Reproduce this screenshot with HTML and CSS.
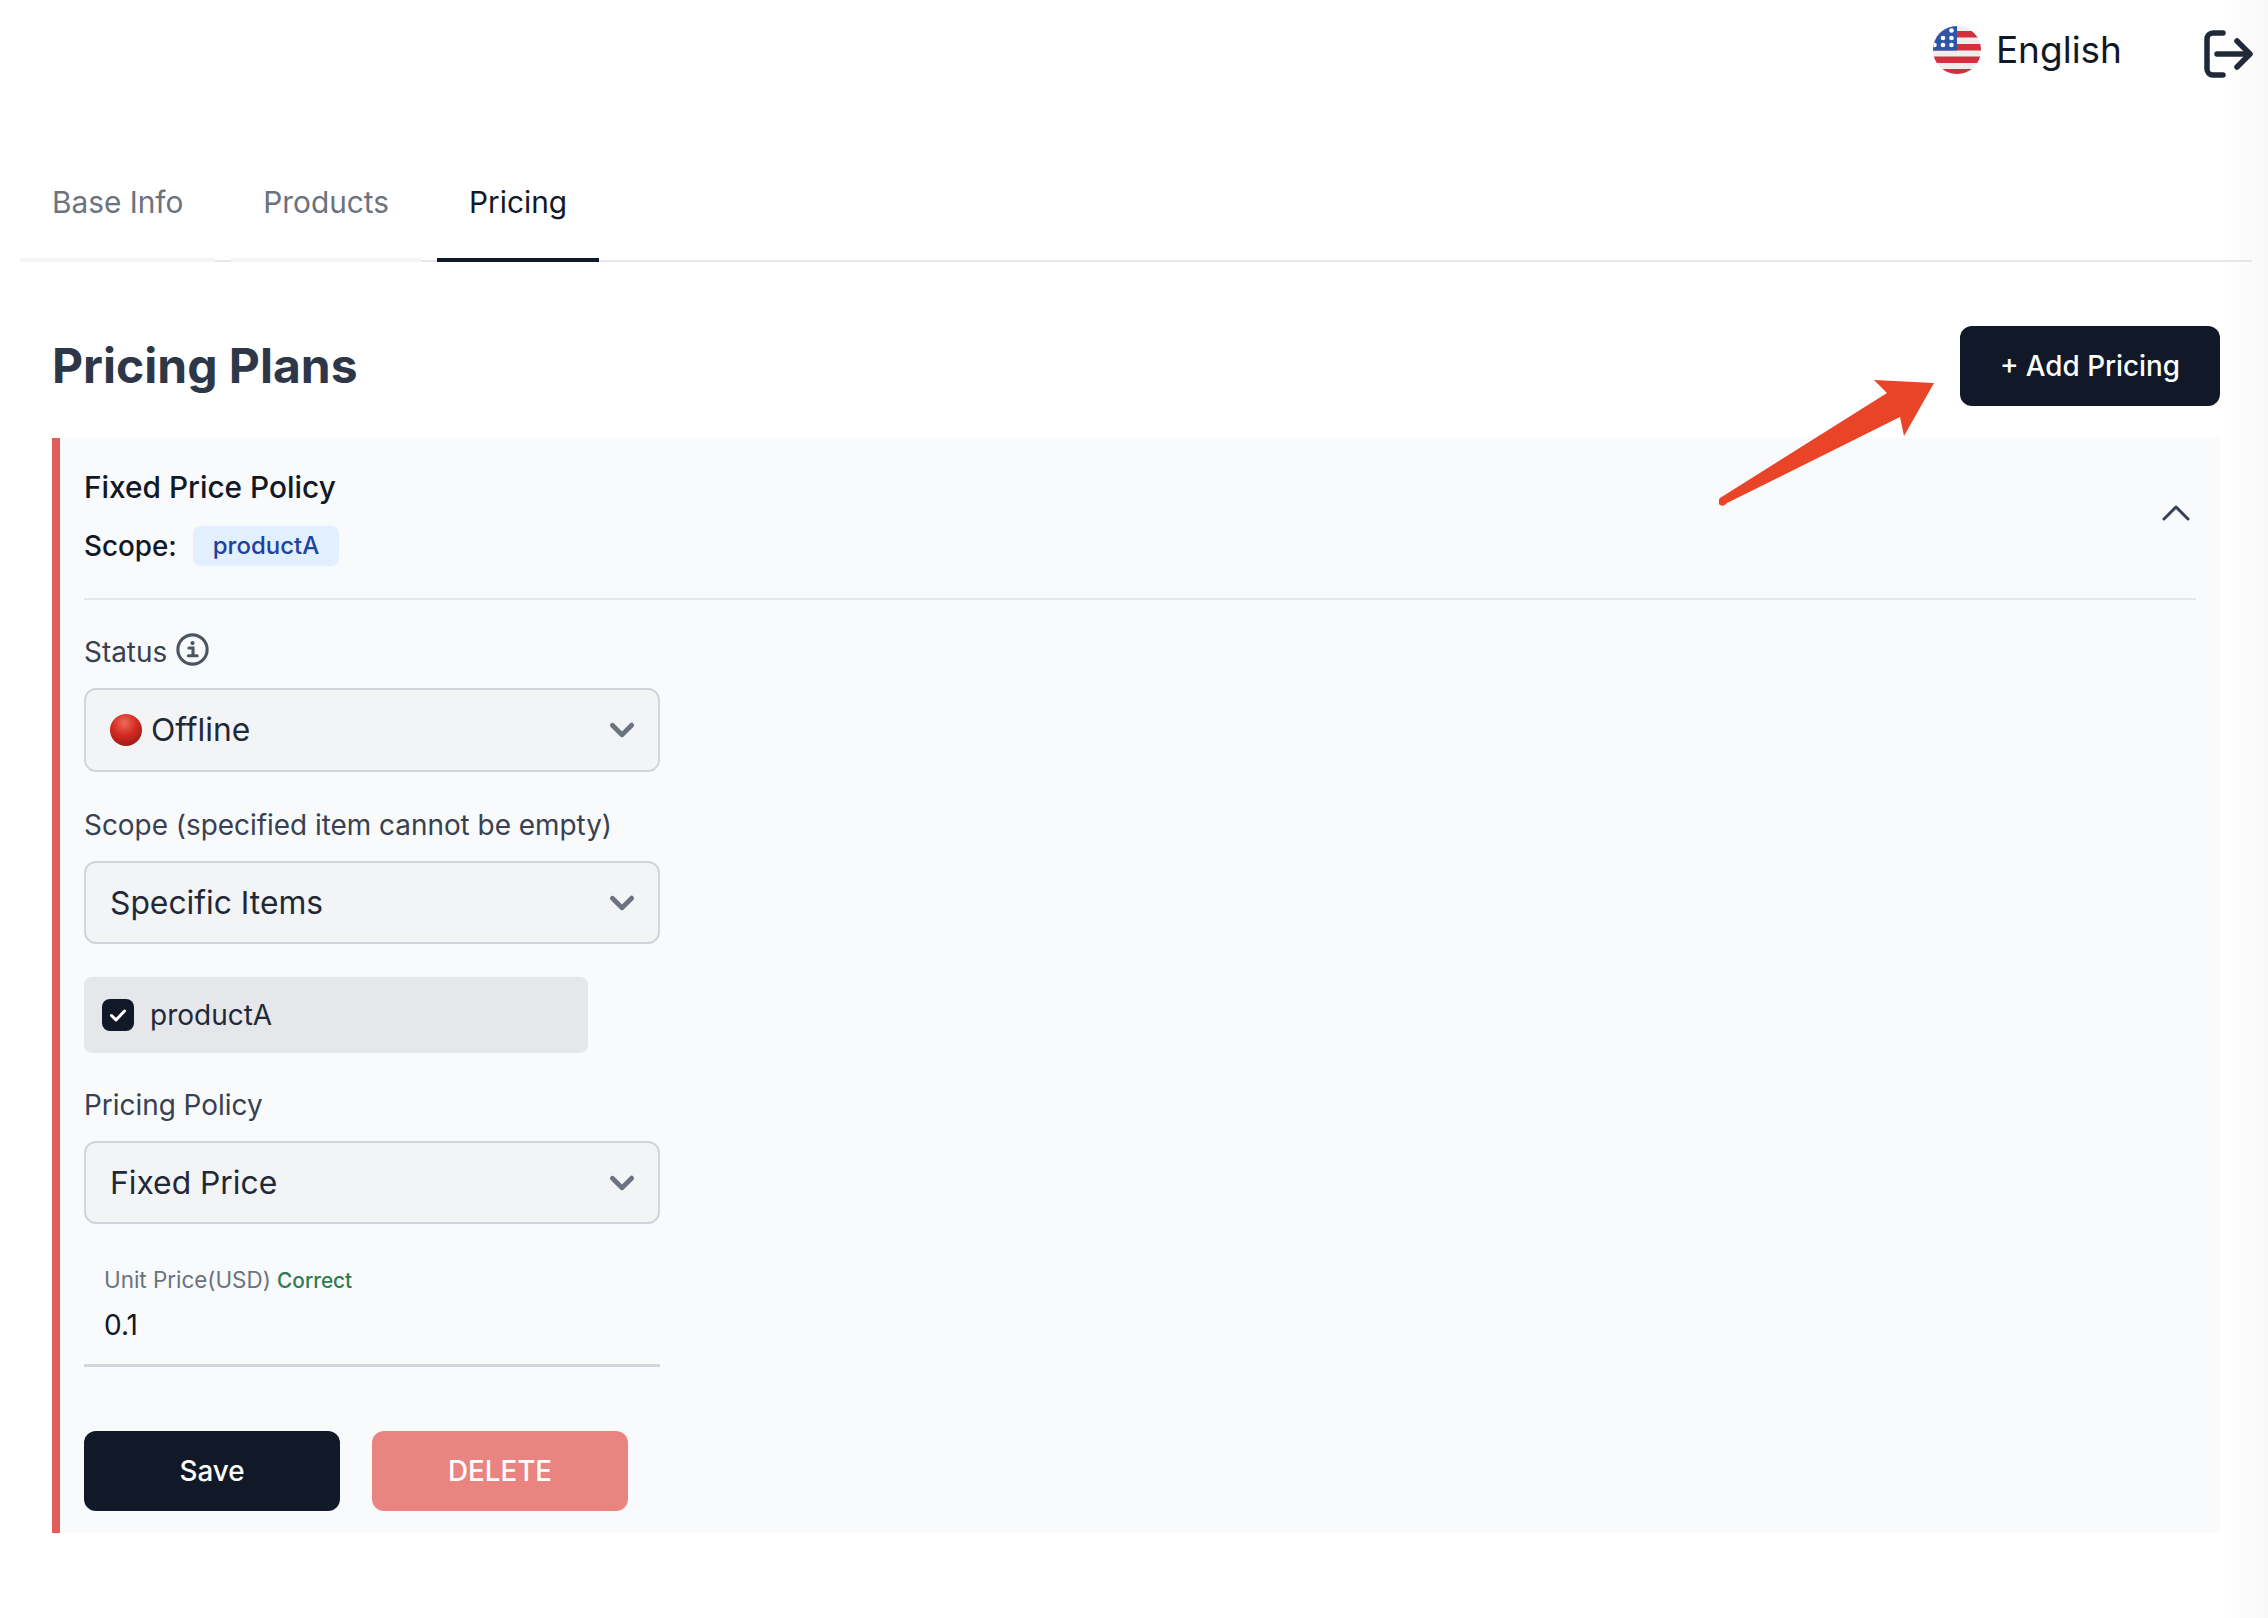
FILE: index.html
```html
<!DOCTYPE html>
<html lang="en">
<head>
<meta charset="utf-8">
<title>Pricing Plans</title>
<link rel="stylesheet" href="styles.css">
</head>
<body>
<div class="edge-shade"></div>
<header class="topbar">
  <div class="lang">
    <svg class="flag" viewBox="0 0 48 48" width="48" height="48">
      <defs><clipPath id="flagclip"><circle cx="24" cy="24" r="24"/></clipPath></defs>
      <g clip-path="url(#flagclip)">
        <rect width="48" height="48" fill="#eeeeee"/>
        <rect y="5" width="48" height="6.5" fill="#d32f3c"/>
        <rect y="18" width="48" height="6.5" fill="#d32f3c"/>
        <rect y="30.500" width="48" height="6.500" fill="#d32f3c"/>
        <rect y="43" width="48" height="6" fill="#d32f3c"/>
        <rect width="24" height="24.500" fill="#2f55a8"/>
        <g fill="#ffffff">
          <circle cx="18.500" cy="4.500" r="2.300"/>
          <circle cx="10" cy="12" r="2.300"/>
          <circle cx="18.500" cy="12" r="2.300"/>
          <circle cx="1.500" cy="19" r="2.300"/>
          <circle cx="10" cy="19" r="2.300"/>
          <circle cx="18.500" cy="19" r="2.300"/>
        </g>
      </g>
    </svg>
    <span class="lang-name">English</span>
  </div>
  <svg class="logout" viewBox="0 0 52 52" width="52" height="52" fill="none" stroke="#1f2937" stroke-width="5.500" stroke-linecap="round" stroke-linejoin="round">
    <path d="M21 5H11a6 6 0 0 0-6 6v30a6 6 0 0 0 6 6h10"/>
    <path d="M15 26h32"/>
    <path d="M35 13l13 13-13 13"/>
  </svg>
</header>

<main class="main">
  <nav class="tabs">
    <a class="tab">Base Info</a>
    <a class="tab">Products</a>
    <a class="tab tab-active">Pricing</a>
  </nav>

  <section class="content">
    <div class="section-head">
      <h1 class="title">Pricing Plans</h1>
      <button class="btn btn-dark btn-add">+ Add Pricing</button>
    </div>

    <article class="card">
      <div class="card-head">
        <div class="card-head-text">
          <div class="policy-name">Fixed Price Policy</div>
          <div class="scope-row"><span class="scope-key">Scope:</span><span class="badge">productA</span></div>
        </div>
        <svg class="collapse" viewBox="0 0 32 20" width="32" height="20" fill="none" stroke="#374151" stroke-width="3" stroke-linecap="round" stroke-linejoin="round"><path d="M4 16L16 4l12 12"/></svg>
      </div>

      <div class="form">
        <div class="label label-status">Status
          <svg class="info" viewBox="0 0 32 32" width="33" height="33" fill="none" stroke="#4b5563" stroke-width="3"><circle cx="16" cy="16" r="14.200"/><path d="M12.500 14.500h4v7M12 22h8.500" stroke-linecap="round"/><circle cx="16" cy="9.800" r="2" fill="#4b5563" stroke="none"/></svg>
        </div>
        <div class="select select-tall">
          <svg class="dot" viewBox="0 0 32 32" width="32" height="32"><defs><radialGradient id="reddot" cx="45%" cy="28%" r="78%"><stop offset="0" stop-color="#ee6a5c"/><stop offset="0.5" stop-color="#d32a20"/><stop offset="1" stop-color="#961a14"/></radialGradient></defs><circle cx="16" cy="16" r="16" fill="url(#reddot)"/></svg>
          <span class="select-text">Offline</span>
          <svg class="chev" viewBox="0 0 20 20" width="48" height="48"><path fill="#6b7280" fill-rule="evenodd" d="M5.293 7.293a1 1 0 011.414 0L10 10.586l3.293-3.293a1 1 0 111.414 1.414l-4 4a1 1 0 01-1.414 0l-4-4a1 1 0 010-1.414z"/></svg>
        </div>

        <div class="label label-scope">Scope (specified item cannot be empty)</div>
        <div class="select">
          <span class="select-text">Specific Items</span>
          <svg class="chev" viewBox="0 0 20 20" width="48" height="48"><path fill="#6b7280" fill-rule="evenodd" d="M5.293 7.293a1 1 0 011.414 0L10 10.586l3.293-3.293a1 1 0 111.414 1.414l-4 4a1 1 0 01-1.414 0l-4-4a1 1 0 010-1.414z"/></svg>
        </div>

        <div class="check-item">
          <span class="checkbox"><svg viewBox="0 0 20 20" width="20" height="20" fill="none" stroke="#fff" stroke-width="3" stroke-linecap="round" stroke-linejoin="round"><path d="M3.500 10.500l4.500 4.500 8.500-9"/></svg></span>
          <span class="check-text">productA</span>
        </div>

        <div class="label label-policy">Pricing Policy</div>
        <div class="select">
          <span class="select-text">Fixed Price</span>
          <svg class="chev" viewBox="0 0 20 20" width="48" height="48"><path fill="#6b7280" fill-rule="evenodd" d="M5.293 7.293a1 1 0 011.414 0L10 10.586l3.293-3.293a1 1 0 111.414 1.414l-4 4a1 1 0 01-1.414 0l-4-4a1 1 0 010-1.414z"/></svg>
        </div>

        <div class="float-field">
          <div class="float-label">Unit Price(USD) <span class="ok">Correct</span></div>
          <div class="float-value">0.1</div>
        </div>
      </div>

      <div class="actions">
        <button class="btn btn-dark btn-wide">Save</button>
        <button class="btn btn-del btn-wide">DELETE</button>
      </div>
    </article>
  </section>
</main>

<svg class="annotation" viewBox="0 0 230 136" width="230" height="136">
  <path fill="#e94427" d="M215 3 155 0 168 13 1 118Q-2 122 1 125 5 127 8 123L181 37 185 56Z"/>
</svg>
</body>
</html>
```

FILE: styles.css
```css
* { box-sizing: border-box; }
html, body { margin: 0; padding: 0; }
body {
  position: relative;
  width: 2268px;
  height: 1618px;
  overflow: hidden;
  background: #ffffff;
  font-family: Inter, "Liberation Sans", sans-serif;
  color: #111827;
}
.edge-shade {
  position: absolute;
  top: 0;
  right: 0;
  bottom: 0;
  width: 46px;
  background: linear-gradient(to right, #ffffff, #f8f8f8);
}
.topbar {
  position: relative;
  height: 100px;
  display: flex;
  justify-content: flex-end;
  padding: 26px 14px 0 0;
}
.lang { display: flex; align-items: center; height: 48px; margin-right: 80px; }
.lang-name { margin-left: 15px; font-size: 37px; line-height: 48px; color: #111827; }
.logout { margin-top: 2px; }
.main { position: relative; padding: 0 16px 0 20px; }
.tabs {
  height: 162px;
  display: flex;
  align-items: flex-end;
  gap: 16px;
  border-bottom: 2px solid #e5e7eb;
}
.tab {
  height: 102px;
  padding: 22px 32px 0;
  margin-bottom: -2px;
  font-size: 29.800px;
  line-height: 40px;
  color: #6b7280;
  border-bottom: 4px solid #f3f4f6;
}
.tab-active { color: #111827; border-bottom-color: #111827; }
.content { padding: 64px 32px 0; }
.section-head { display: flex; justify-content: space-between; align-items: center; height: 80px; }
.title { margin: 0; font-size: 48px; line-height: 60px; font-weight: 700; color: #2d3748; }
.btn {
  height: 80px;
  border: 0;
  border-radius: 12px;
  font-family: inherit;
  font-size: 27.800px;
  font-weight: 500;
  color: #ffffff;
  text-align: center;
}
.btn-dark { background: #111827; }
.btn-del { background: #e98481; }
.btn-add { width: 260px; }
.btn-wide { width: 256px; }
.card {
  margin-top: 32px;
  height: 1095px;
  padding: 0 24px;
  background: #f9fafb;
  border-left: 8px solid #e25d5a;
}
.card-head {
  height: 162px;
  padding-top: 29px;
  display: flex;
  justify-content: space-between;
  align-items: flex-start;
  border-bottom: 2px solid #e5e7eb;
}
.policy-name { font-size: 29.800px; line-height: 40px; font-weight: 500; color: #111827; }
.scope-row { display: flex; align-items: center; margin-top: 19px; }
.scope-key { font-size: 27.800px; line-height: 40px; font-weight: 500; color: #111827; }
.badge {
  margin-left: 16px;
  padding: 0 20px;
  height: 40px;
  line-height: 40px;
  border-radius: 8px;
  font-size: 24px;
  font-weight: 500;
  background: #e1effe;
  color: #1e429f;
}
.collapse { margin: 36px 4px 0 0; }
.form { width: 576px; }
.label { font-size: 27.900px; line-height: 40px; color: #374151; }
.label-status { display: flex; align-items: center; gap: 9px; margin-top: 32px; height: 40px; }
.info { position: relative; top: -3px; }
.select {
  display: flex;
  align-items: center;
  height: 83px;
  margin-top: 16px;
  padding: 0 12px 0 24px;
  background: #f3f4f6;
  border: 2px solid #d1d5db;
  border-radius: 12px;
}
.select-tall { height: 84px; }
.select-text { flex: 1; font-size: 31.800px; line-height: 48px; color: #1f2937; }
.dot { margin-right: 9px; }
.label-scope { margin-top: 33px; }
.label-policy { margin-top: 32px; }
.check-item {
  display: flex;
  align-items: center;
  width: 504px;
  height: 76px;
  margin-top: 33px;
  padding: 0 18px;
  background: #e5e7eb;
  border-radius: 8px;
}
.checkbox {
  display: flex;
  align-items: center;
  justify-content: center;
  width: 32px;
  height: 32px;
  border-radius: 8px;
  background: #111827;
}
.check-text { margin-left: 16px; font-size: 28px; line-height: 40px; color: #1f2937; }
.float-field {
  height: 120px;
  margin-top: 23px;
  padding: 17px 20px 0;
  border-bottom: 3px solid #d1d5db;
}
.float-label { font-size: 22.400px; line-height: 32px; color: #6b7280; }
.ok { font-size: 20.800px; font-weight: 500; color: #2f7a52; }
.float-value { margin-top: 8px; font-size: 28px; line-height: 40px; color: #111827; }
.actions { display: flex; gap: 32px; margin-top: 64px; }
.annotation { position: absolute; left: 1719px; top: 380px; }
```
